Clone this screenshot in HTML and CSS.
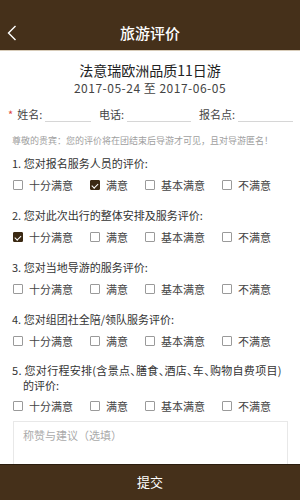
FILE: index.html
```html
<!DOCTYPE html>
<html lang="zh">
<head>
<meta charset="utf-8">
<title>旅游评价</title>
<link rel="stylesheet" href="styles.css">
</head>
<body>
<header class="topbar">
  <span class="back">
    <svg width="10" height="16" viewBox="0 0 10 16"><polyline points="8.5,1 1.5,8 8.5,15" fill="none" stroke="#fff" stroke-width="1.4"/></svg>
  </span>
  <h1 class="topbar-title">旅游评价</h1>
  <span></span>
</header>

<section class="trip">
  <div class="trip-name">法意瑞欧洲品质11日游</div>
  <div class="trip-date">2017-05-24 至 2017-06-05</div>
</section>

<div class="fields">
  <label class="field"><span class="field-label"><span class="req">*</span>姓名:</span><input class="field-input" type="text"></label>
  <label class="field"><span class="field-label">电话:</span><input class="field-input" type="text"></label>
  <label class="field"><span class="field-label">报名点:</span><input class="field-input" type="text"></label>
</div>

<p class="note">尊敬的贵宾：您的评价将在团结束后导游才可见，且对导游匿名！</p>

<div class="questions">
  <div class="q">
    <p class="q-title">1. 您对报名服务人员的评价:</p>
    <div class="opts">
      <span class="opt"><i class="box"></i>十分满意</span>
      <span class="opt"><i class="box on"></i>满意</span>
      <span class="opt"><i class="box"></i>基本满意</span>
      <span class="opt"><i class="box"></i>不满意</span>
    </div>
  </div>
  <div class="q">
    <p class="q-title">2. 您对此次出行的整体安排及服务评价:</p>
    <div class="opts">
      <span class="opt"><i class="box on"></i>十分满意</span>
      <span class="opt"><i class="box"></i>满意</span>
      <span class="opt"><i class="box"></i>基本满意</span>
      <span class="opt"><i class="box"></i>不满意</span>
    </div>
  </div>
  <div class="q">
    <p class="q-title">3. 您对当地导游的服务评价:</p>
    <div class="opts">
      <span class="opt"><i class="box"></i>十分满意</span>
      <span class="opt"><i class="box"></i>满意</span>
      <span class="opt"><i class="box"></i>基本满意</span>
      <span class="opt"><i class="box"></i>不满意</span>
    </div>
  </div>
  <div class="q">
    <p class="q-title">4. 您对组团社全陪/领队服务评价:</p>
    <div class="opts">
      <span class="opt"><i class="box"></i>十分满意</span>
      <span class="opt"><i class="box"></i>满意</span>
      <span class="opt"><i class="box"></i>基本满意</span>
      <span class="opt"><i class="box"></i>不满意</span>
    </div>
  </div>
  <div class="q">
    <p class="q-title q-long"><span class="q-line">5. 您对行程安排(含景点、膳食、酒店、车、购物自费项目)</span><span class="q-cont">的评价:</span></p>
    <div class="opts">
      <span class="opt"><i class="box"></i>十分满意</span>
      <span class="opt"><i class="box"></i>满意</span>
      <span class="opt"><i class="box"></i>基本满意</span>
      <span class="opt"><i class="box"></i>不满意</span>
    </div>
  </div>
</div>

<textarea class="comment" placeholder="称赞与建议（选填）"></textarea>

<footer class="submit-bar">提交</footer>
</body>
</html>
```

FILE: styles.css
```css
* { box-sizing: border-box; }

html, body {
  margin: 0;
  padding: 0;
  background: #fff;
  font-family: "Noto Sans CJK SC", "Noto Sans", sans-serif;
  color: #333;
}

body { padding-bottom: 40px; overflow-x: hidden; }

.topbar {
  height: 51px;
  padding-top: 17px;
  background: #45301a;
  border-bottom: 1px solid #d8ccb9;
  display: grid;
  grid-template-columns: 40px 1fr 40px;
  align-items: start;
}

.back {
  height: 32px;
  padding-left: 7px;
  display: flex;
  align-items: center;
}

.back svg { display: block; }

.topbar-title {
  margin: 0;
  height: 32px;
  line-height: 32px;
  text-align: center;
  color: #fff;
  font-size: 15px;
  font-weight: 500;
}

.trip {
  margin-top: 10px;
  text-align: center;
}

.trip-name {
  font-size: 14px;
  line-height: 19px;
  color: #222;
}

.trip-date {
  font-size: 12px;
  line-height: 16px;
  letter-spacing: 0.5px;
  color: #444;
}

.fields {
  margin-top: 10px;
  padding: 0 7px 0 8px;
  display: grid;
  grid-template-columns: 83px 92px 1fr;
  gap: 8px;
}

.field {
  display: flex;
  align-items: flex-start;
  height: 16px;
  min-width: 0;
}

.field-label {
  font-size: 11px;
  line-height: 16px;
  color: #444;
  white-space: nowrap;
}

.req {
  color: #e0443c;
  margin-right: 4px;
}

.field-input {
  flex: 1;
  min-width: 0;
  width: 10px;
  height: 16px;
  margin: 0 0 0 3px;
  padding: 0;
  border: none;
  border-bottom: 1px solid #d6d6d6;
  background: transparent;
  outline: none;
  font: inherit;
  font-size: 11px;
}

.note {
  margin: 13px 0 0;
  padding: 0 12px;
  font-size: 9px;
  line-height: 12px;
  color: #a0a0a0;
}

.questions {
  margin-top: 9px;
  padding: 0 12px;
}

.q + .q { margin-top: 16px; }

.q-title {
  margin: 0;
  font-size: 11px;
  line-height: 14px;
  color: #333;
}

.q-long { line-height: 15px; margin-top: -1px; }

.q-line {
  display: block;
  white-space: nowrap;
  font-feature-settings: "halt";
  letter-spacing: 0.3px;
}

.q-cont {
  display: block;
  padding-left: 11px;
}

.opts {
  margin-top: 8px;
  height: 14px;
  display: flex;
  align-items: center;
  gap: 17px;
  padding-left: 1px;
}

.q-long + .opts { margin-top: 6px; }

.opt {
  display: flex;
  align-items: center;
  font-size: 11px;
  line-height: 14px;
  color: #444;
  white-space: nowrap;
}

.box {
  width: 10px;
  height: 10px;
  margin-right: 6px;
  border: 1px solid #9a9a9a;
  border-radius: 1px;
  background: #fff;
  position: relative;
}

.box.on {
  background: #3b2913;
  border-color: #3b2913;
}

.box.on::after {
  content: "";
  position: absolute;
  left: 2px;
  top: 0.5px;
  width: 2.5px;
  height: 5px;
  border-right: 1.3px solid #fff;
  border-bottom: 1.3px solid #fff;
  transform: rotate(45deg);
}

.comment {
  display: block;
  margin: 8px 12px 0 13px;
  width: 275px;
  height: 64px;
  padding: 7px 9px;
  border: 1px solid #e8e8e8;
  border-radius: 0;
  resize: none;
  font-family: inherit;
  font-size: 11px;
  line-height: 12px;
  color: #333;
  outline: none;
}

.comment::placeholder { color: #aaa; }

.submit-bar {
  position: fixed;
  left: 0;
  right: 0;
  bottom: 0;
  height: 36px;
  background: #45301a;
  border-top: 1px solid #2a1c0d;
  color: #fff;
  font-size: 13px;
  line-height: 34px;
  text-align: center;
}
```
